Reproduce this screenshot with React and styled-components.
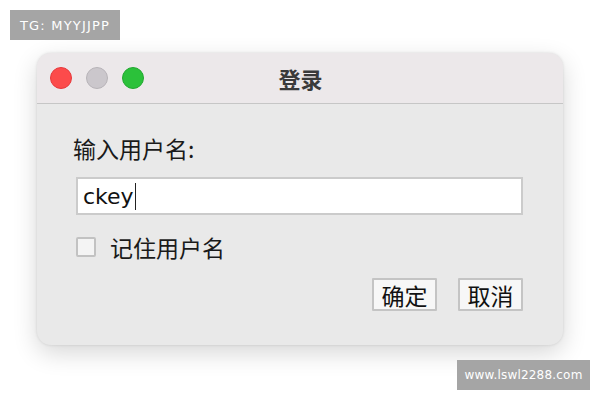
import React from 'react';
import styled, { createGlobalStyle } from 'styled-components';

const GlobalStyle = createGlobalStyle`
  html, body {
    margin: 0;
    padding: 0;
    background: #ffffff;
  }
  * {
    box-sizing: border-box;
  }
`;

const Page = styled.div`
  position: relative;
  width: 600px;
  height: 400px;
  overflow: hidden;
  background: #ffffff;
  padding: 53px 0 0 37px;
  font-family: "Noto Sans CJK SC", "Noto Sans", sans-serif;
`;

const Watermark = styled.div`
  position: absolute;
  background: #a5a5a5;
  color: #ffffff;
  font-family: "DejaVu Sans", "Liberation Sans", sans-serif;
  font-size: ${(p) => p.size}px;
  display: flex;
  align-items: center;
  justify-content: center;
  height: 30px;
  letter-spacing: ${(p) => p.spacing}px;
`;

const TopMark = styled(Watermark)`
  left: 10px;
  top: 10px;
  width: 110px;
`;

const BottomMark = styled(Watermark)`
  left: 457px;
  top: 360px;
  width: 133px;
`;

const Window = styled.div`
  width: 526px;
  height: 292px;
  border-radius: 14px;
  background: #e9e9e9;
  box-shadow: 0 8px 24px rgba(0, 0, 0, 0.16), 0 0 3px rgba(0, 0, 0, 0.12);
  overflow: hidden;
  display: flex;
  flex-direction: column;
`;

const TitleBar = styled.div`
  position: relative;
  height: 51px;
  flex-shrink: 0;
  background: #ece8ea;
  border-bottom: 1px solid #c6c6c6;
  display: flex;
  align-items: center;
  padding-left: 13px;
  gap: 14px;
`;

const Light = styled.span`
  width: 22px;
  height: 22px;
  border-radius: 50%;
  background: ${(p) => p.color};
  border: 1px solid ${(p) => p.edge};
`;

const Title = styled.div`
  position: absolute;
  left: 0;
  right: 0;
  top: 0;
  bottom: 0;
  display: flex;
  align-items: center;
  justify-content: center;
  font-size: 22px;
  font-weight: 700;
  color: #3a3a3a;
  padding-left: 1px;
  pointer-events: none;
`;

const Body = styled.div`
  flex: 1;
  padding: 30px 40px 0 36px;
  display: flex;
  flex-direction: column;
`;

const Label = styled.div`
  font-size: 23px;
  line-height: 28px;
  color: #1a1a1a;
`;

const Input = styled.div`
  margin: 15px 0 0 3px;
  height: 38px;
  background: #ffffff;
  border: 2px solid #cbcbcb;
  display: flex;
  align-items: center;
  padding-left: 5px;
  font-family: "DejaVu Sans", "Liberation Sans", sans-serif;
  font-size: 22px;
  font-weight: 500;
  color: #111;
`;

const Caret = styled.span`
  display: inline-block;
  width: 1px;
  height: 27px;
  background: #222;
  margin-left: 1px;
`;

const CheckRow = styled.label`
  margin: 18px 0 0 3px;
  height: 28px;
  display: flex;
  align-items: center;
  gap: 14px;
  font-size: 23px;
  color: #1a1a1a;
`;

const Box = styled.span`
  width: 20px;
  height: 20px;
  border: 2px solid #c2c2c2;
  border-radius: 2px;
  background: #f4f4f4;
`;

const Buttons = styled.div`
  margin-top: 17px;
  display: flex;
  justify-content: flex-end;
  gap: 21px;
`;

const Button = styled.button`
  width: 65px;
  height: 33px;
  padding: 0;
  background: #f7f7f7;
  border: 2px solid #c4c4c4;
  border-radius: 1px;
  font-family: "Noto Sans CJK SC", sans-serif;
  font-size: 23px;
  color: #111;
  display: flex;
  align-items: center;
  justify-content: center;
`;

export default function App() {
  return (
    <>
      <GlobalStyle />
      <Page>
        <Window>
          <TitleBar>
            <Light color="#fc4b4b" edge="#e6393c" />
            <Light color="#cbc7cc" edge="#b7b3b8" />
            <Light color="#2bc13a" edge="#22a830" />
            <Title>登录</Title>
          </TitleBar>
          <Body>
            <Label>输入用户名:</Label>
            <Input>
              ckey
              <Caret />
            </Input>
            <CheckRow>
              <Box />
              记住用户名
            </CheckRow>
            <Buttons>
              <Button>确定</Button>
              <Button>取消</Button>
            </Buttons>
          </Body>
        </Window>
        <TopMark size={13} spacing={1.2}>TG: MYYJJPP</TopMark>
        <BottomMark size={12} spacing={0.2}>www.lswl2288.com</BottomMark>
      </Page>
    </>
  );
}
